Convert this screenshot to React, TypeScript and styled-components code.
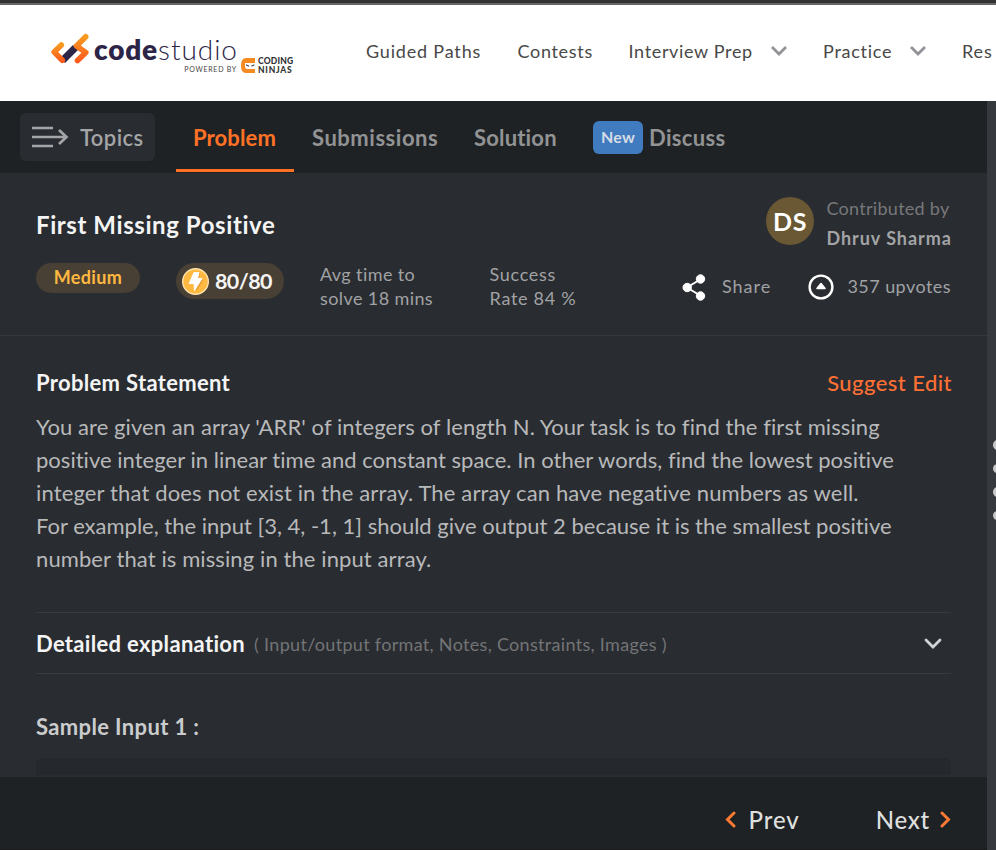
import React from 'react';
import styled, { createGlobalStyle } from 'styled-components';

const GlobalStyle = createGlobalStyle`
  *, *::before, *::after { box-sizing: border-box; }
  body {
    margin: 0;
    overflow: hidden;
    background: #292c31;
    font-family: Lato, "Open Sans", sans-serif;
    font-variant-ligatures: none;
    white-space: nowrap;
  }
  svg { display: block; flex: none; }
  h1, h2, h3, p { margin: 0; }
`;

const Page = styled.div`
  width: 996px;
  height: 850px;
  display: flex;
  flex-direction: column;
  overflow: hidden;
`;

const SiteHeader = styled.header`
  flex: none;
  height: 101px;
  display: flex;
  background: #fff;
  border-top: 3px solid #333;
  box-shadow: inset 0 2px #666;
`;

const Brand = styled.div`
  flex: none;
  width: 366px;
  padding: 30px 0 0 50px;
  display: flex;
  align-items: flex-start;
`;

const Wordmark = styled.div`
  margin-left: 4px;
  display: flex;
  flex-direction: column;
  width: 145px;
`;

const Name = styled.div`
  height: 32px;
  font-size: 28px;
  line-height: 33px;
  letter-spacing: 0.95px;
  font-weight: 300;
  color: #2c2548;
  b { font-weight: 800; letter-spacing: 0.8px; }
`;

const Powered = styled.div`
  align-self: flex-end;
  margin-right: 2px;
  font-size: 7px;
  line-height: 8px;
  letter-spacing: 0.75px;
  color: #444;
`;

const Ninjas = styled.div`
  display: flex;
  gap: 3px;
  margin: 23px 0 0 2px;
  font-size: 8.5px;
  font-weight: 900;
  line-height: 8.5px;
  color: #333;
  svg { margin-top: 2px; }
`;

const NinjasLine = styled.div<{ $ls: number }>`
  height: 9px;
  line-height: 11px;
  letter-spacing: ${(p) => p.$ls}px;
`;

const SiteNav = styled.nav`
  display: flex;
  align-items: center;
  height: 95px;
  font-size: 18px;
  color: #484848;
`;

const SiteLink = styled.a<{ $w: number; $ls: number }>`
  flex: none;
  width: ${(p) => p.$w}px;
  letter-spacing: ${(p) => p.$ls}px;
`;

const ArrowSlot = styled.span`
  flex: none;
  width: 52px;
`;

const Workspace = styled.div`
  flex: 1;
  min-height: 0;
  display: flex;
`;

const Panel = styled.main`
  width: 987px;
  display: flex;
  flex-direction: column;
  color: #b3b4b5;
`;

const Divider = styled.aside`
  width: 9px;
  background: #36393e;
  overflow: hidden;
  display: flex;
  flex-direction: column;
  gap: 14px;
  padding: 339px 0 0 6px;
`;

const GripDot = styled.i`
  flex: none;
  width: 9px;
  height: 9.6px;
  border-radius: 50%;
  background: #c8c9ca;
`;

const TabBar = styled.nav`
  flex: none;
  height: 72px;
  display: flex;
  align-items: center;
  padding-left: 20px;
  background: #1f2224;
  font-size: 22px;
  font-weight: 700;
`;

const TopicsButton = styled.button`
  width: 135px;
  height: 48px;
  margin-right: 21px;
  padding: 0 0 0 12px;
  display: flex;
  align-items: center;
  gap: 11px;
  border: 0;
  border-radius: 6px;
  background: #292c31;
  color: #a4a5a7;
  font: 600 22px Lato, sans-serif;
  letter-spacing: 0.42px;
`;

const Tab = styled.a<{ $w: number; $ls: number; $active?: boolean }>`
  width: ${(p) => p.$w}px;
  height: 72px;
  padding: 0 0 0 ${(p) => (p.$active ? 17 : 18)}px;
  display: flex;
  align-items: center;
  letter-spacing: ${(p) => p.$ls}px;
  color: ${(p) => (p.$active ? '#ff7226' : '#929394')};
  box-shadow: ${(p) => (p.$active ? 'inset 0 -1px #1f2224, inset 0 -4px #ff7226' : 'none')};
`;

const NewBadge = styled.span`
  width: 50px;
  height: 33px;
  margin-right: 6px;
  border-radius: 6px;
  background: #407abf;
  color: #d5dce6;
  font-size: 16px;
  line-height: 31px;
  letter-spacing: 0.2px;
  text-align: center;
`;

const Summary = styled.section`
  flex: none;
  height: 163px;
  display: flex;
  justify-content: space-between;
  padding: 24px 36px 0;
  border-bottom: 1px solid #35383c;
`;

const Title = styled.h1`
  height: 66px;
  font-size: 24px;
  line-height: 55px;
  font-weight: 700;
  letter-spacing: 0.58px;
  color: #f4f4f4;
`;

const Stats = styled.div`
  display: flex;
  align-items: flex-start;
`;

const Difficulty = styled.span`
  width: 104px;
  height: 30px;
  border-radius: 15px;
  background: #483f35;
  color: #ffb940;
  font-size: 18px;
  font-weight: 700;
  line-height: 29px;
  letter-spacing: 0.35px;
  text-align: center;
`;

const Score = styled.span`
  width: 108px;
  height: 36px;
  margin-left: 36px;
  padding-left: 6px;
  display: flex;
  align-items: center;
  gap: 6px;
  border-radius: 18px;
  background: #483f35;
  color: #f4f4f4;
  font-size: 21.5px;
  font-weight: 700;
  letter-spacing: -0.6px;
`;

const Stat = styled.div<{ $left: number; $ls: number }>`
  margin: -1px 0 0 ${(p) => p.$left}px;
  font-size: 18px;
  line-height: 24px;
  letter-spacing: ${(p) => p.$ls}px;
  color: #a1a2a4;
`;

const SideInfo = styled.div`
  width: 269px;
  display: flex;
  flex-direction: column;
`;

const Contributor = styled.div`
  display: flex;
  height: 57px;
  padding-left: 84px;
  gap: 12.5px;
  font-size: 18px;
  line-height: 30px;
`;

const Avatar = styled.div`
  flex: none;
  width: 48px;
  height: 48px;
  border-radius: 50%;
  background: #695833;
  color: #fff;
  font-size: 25px;
  font-weight: 700;
  line-height: 49px;
  letter-spacing: 0.6px;
  text-align: center;
`;

const Credit = styled.div`
  margin-top: -4px;
  letter-spacing: 0.28px;
  color: #77787a;
  b { display: block; letter-spacing: 0.94px; color: #a3a4a5; }
`;

const Actions = styled.div`
  margin-top: 19px;
  display: flex;
  align-items: center;
  height: 28px;
  font-size: 18px;
  line-height: 24px;
  color: #a1a2a4;
`;

const Share = styled.span`
  width: 89px;
  margin: -2px 0 0 15px;
  letter-spacing: 0.98px;
`;

const Upvotes = styled.span`
  margin: -2px 0 0 13px;
  letter-spacing: 0.45px;
`;

const Content = styled.section`
  flex: 1;
  min-height: 0;
  overflow: hidden;
  padding: 29px 36px 0;
`;

const HeadingRow = styled.div`
  display: flex;
  justify-content: space-between;
  align-items: center;
  height: 34px;
`;

const Heading = styled.h2`
  font-size: 22px;
  font-weight: 700;
  letter-spacing: 0.32px;
  color: #f4f4f4;
`;

const SuggestLink = styled.a`
  margin-right: -1px;
  font-size: 22px;
  font-weight: 500;
  letter-spacing: 0.45px;
  color: #ff7034;
`;

const Statement = styled.div`
  margin-top: 11px;
  font-size: 22px;
  line-height: 33px;
  color: #b8b9ba;
`;

const Line = styled.p<{ $ls: number }>`
  letter-spacing: ${(p) => p.$ls}px;
`;

const Accordion = styled.div`
  margin-top: 37px;
  height: 62px;
  display: flex;
  align-items: center;
  border: solid #373a3e;
  border-width: 1px 0;
  svg { margin: 1px 9px 0 auto; }
`;

const Hint = styled.span`
  margin: 1px 0 0 9px;
  font-size: 18px;
  letter-spacing: 0.31px;
  color: #737476;
`;

const SampleHeading = styled.h3`
  height: 84px;
  padding-top: 36px;
  font-size: 22px;
  line-height: 34px;
  font-weight: 700;
  letter-spacing: 0.36px;
  color: #cbcccd;
`;

const SampleBox = styled.div`
  height: 17px;
  border-radius: 6px 6px 0 0;
  background: #25282c;
`;

const Footer = styled.footer`
  flex: none;
  height: 73px;
  display: flex;
  align-items: center;
  justify-content: flex-end;
  gap: 76px;
  padding: 11px 36px 0 0;
  background: #1f2224;
  box-shadow: inset 0 -1px #1a1c1e;
`;

const PageLink = styled.a<{ $ls: number; $gap: number }>`
  display: flex;
  align-items: center;
  gap: ${(p) => p.$gap}px;
  color: #dedfdf;
  font-size: 24px;
  font-weight: 500;
  letter-spacing: ${(p) => p.$ls}px;
`;

const BrandMark = () => (
  <svg width="40" height="34" viewBox="0 0 40 34" fill="none">
    <defs>
      <linearGradient id="flame" x1="0" y1="0" x2="0" y2="1">
        <stop offset="0" stopColor="#f79a20" />
        <stop offset="1" stopColor="#fb5c1c" />
      </linearGradient>
    </defs>
    <path d="M12.5 27.5L25.5 14.5" stroke="#2c2548" strokeWidth="7" />
    <path d="M11.3 12L4.2 19L12.3 27.2" stroke="url(#flame)" strokeWidth="5.6" strokeLinecap="round" strokeLinejoin="round" />
    <path d="M35.7 3.7L26.5 13L35.8 19.5L27.5 27.5" stroke="url(#flame)" strokeWidth="5.6" strokeLinecap="round" strokeLinejoin="round" />
  </svg>
);

const NinjaMark = () => (
  <svg width="14" height="15" viewBox="0 0 14 15">
    <path d="M14 0H5Q0 0 0 7.5T5 15H14V11H6Q4 11 4 9V5H14Z" fill="#f58a20" />
    <path d="M5 6.8L8 8.2M13.4 6.8L10.4 8.2" stroke="#444" strokeWidth="1.1" />
  </svg>
);

type ChevronProps = { width: number; height: number; d: string; color: string; stroke: number; round?: boolean };

const Chevron = ({ width, height, d, color, stroke, round }: ChevronProps) => (
  <svg width={width} height={height} fill="none" stroke={color} strokeWidth={stroke} strokeLinecap={round ? 'round' : 'butt'}>
    <path d={d} />
  </svg>
);

const NavArrow = () => (
  <ArrowSlot>
    <Chevron width={16} height={12} d="M1 2L8 9L15 2" color="#929197" stroke={2.8} />
  </ArrowSlot>
);

const TopicsIcon = () => (
  <svg width="37" height="24" fill="none" stroke="#a4a5a7" strokeWidth="2.7">
    <path d="M0 3H21M0 12H34M0 21H21M27 5L34.5 12L27 19" />
  </svg>
);

const BoltIcon = () => (
  <svg width="27" height="27" viewBox="0 0 27 27">
    <circle cx="13.5" cy="13.5" r="12.8" fill="#ffb940" stroke="#ffe3ae" strokeWidth="1.4" />
    <path d="M13.5 5H18L17 11L21 12L14.5 23L13.5 16H10Z" fill="#e59a32" />
    <path d="M12 4.5H17L15.5 10.5H20L12.5 22.5L12 15.5H7.2Z" fill="#fff" strokeLinejoin="round" stroke="#fff" />
  </svg>
);

const ShareIcon = () => (
  <svg width="25" height="27" fill="#fff" stroke="#fff">
    <path d="M19 5L5 13.5L19 22" fill="none" strokeWidth="2" />
    <circle cx="18.5" cy="5" r="4.2" />
    <circle cx="5.2" cy="13.5" r="4.2" />
    <circle cx="18.5" cy="22" r="4.2" />
  </svg>
);

const UpvoteIcon = () => (
  <svg width="26" height="26" fill="none" stroke="#fff" strokeWidth="2.4">
    <circle cx="13" cy="13" r="11.4" />
    <path d="M13 9.5L17 14.5H9Z" fill="#fff" strokeWidth="1.6" strokeLinejoin="round" />
  </svg>
);

const statement: [string, number][] = [
  ["You are given an array 'ARR' of integers of length N. Your task is to find the first missing", 0.08],
  ['positive integer in linear time and constant space. In other words, find the lowest positive', 0.025],
  ['integer that does not exist in the array. The array can have negative numbers as well.', 0.14],
  ['For example, the input [3, 4, -1, 1] should give output 2 because it is the smallest positive', 0],
  ['number that is missing in the input array.', 0.1],
];

export default function App() {
  return (
    <Page>
      <GlobalStyle />
      <SiteHeader>
        <Brand>
          <BrandMark />
          <Wordmark>
            <Name><b>code</b>studio</Name>
            <Powered>POWERED BY</Powered>
          </Wordmark>
          <Ninjas>
            <NinjaMark />
            <div>
              <NinjasLine $ls={0.2}>CODING</NinjasLine>
              <NinjasLine $ls={0.75}>NINJAS</NinjasLine>
            </div>
          </Ninjas>
        </Brand>
        <SiteNav>
          <SiteLink $w={151.5} $ls={0.82}>Guided Paths</SiteLink>
          <SiteLink $w={111} $ls={0.68}>Contests</SiteLink>
          <SiteLink $w={142.5} $ls={0.66}>Interview Prep</SiteLink>
          <NavArrow />
          <SiteLink $w={87} $ls={0.75}>Practice</SiteLink>
          <NavArrow />
          <SiteLink $w={33} $ls={0.9}>Res</SiteLink>
        </SiteNav>
      </SiteHeader>
      <Workspace>
        <Panel>
          <TabBar>
            <TopicsButton><TopicsIcon />Topics</TopicsButton>
            <Tab $w={118} $ls={0.12} $active>Problem</Tab>
            <Tab $w={162} $ls={0.53}>Submissions</Tab>
            <Tab $w={119} $ls={0.17}>Solution</Tab>
            <Tab $w={170} $ls={0.35}><NewBadge>New</NewBadge>Discuss</Tab>
          </TabBar>
          <Summary>
            <div>
              <Title>First Missing Positive</Title>
              <Stats>
                <Difficulty>Medium</Difficulty>
                <Score><BoltIcon />80/80</Score>
                <Stat $left={36} $ls={0.4}><div>Avg time to</div><div>solve 18 mins</div></Stat>
                <Stat $left={56.5} $ls={0.7}><div>Success</div><div>Rate 84 %</div></Stat>
              </Stats>
            </div>
            <SideInfo>
              <Contributor>
                <Avatar>DS</Avatar>
                <Credit>Contributed by<b>Dhruv Sharma</b></Credit>
              </Contributor>
              <Actions>
                <ShareIcon />
                <Share>Share</Share>
                <UpvoteIcon />
                <Upvotes>357 upvotes</Upvotes>
              </Actions>
            </SideInfo>
          </Summary>
          <Content>
            <HeadingRow>
              <Heading>Problem Statement</Heading>
              <SuggestLink>Suggest Edit</SuggestLink>
            </HeadingRow>
            <Statement>
              {statement.map(([text, ls]) => <Line key={text} $ls={ls}>{text}</Line>)}
            </Statement>
            <Accordion>
              <Heading>Detailed explanation</Heading>
              <Hint>( Input/output format, Notes, Constraints, Images )</Hint>
              <Chevron width={18} height={12} d="M2 2L9 9L16 2" color="#d2d3d5" stroke={2.8} round />
            </Accordion>
            <SampleHeading>Sample Input 1 :</SampleHeading>
            <SampleBox />
          </Content>
          <Footer>
            <PageLink $ls={0.9} $gap={13}>
              <Chevron width={11} height={17} d="M9 2L2.5 8.5L9 15" color="#ff7a33" stroke={2.9} round />
              Prev
            </PageLink>
            <PageLink $ls={0.75} $gap={10}>
              Next
              <Chevron width={11} height={17} d="M2 2L8.5 8.5L2 15" color="#ff7a33" stroke={2.9} round />
            </PageLink>
          </Footer>
        </Panel>
        <Divider><GripDot /><GripDot /><GripDot /><GripDot /></Divider>
      </Workspace>
    </Page>
  );
}
